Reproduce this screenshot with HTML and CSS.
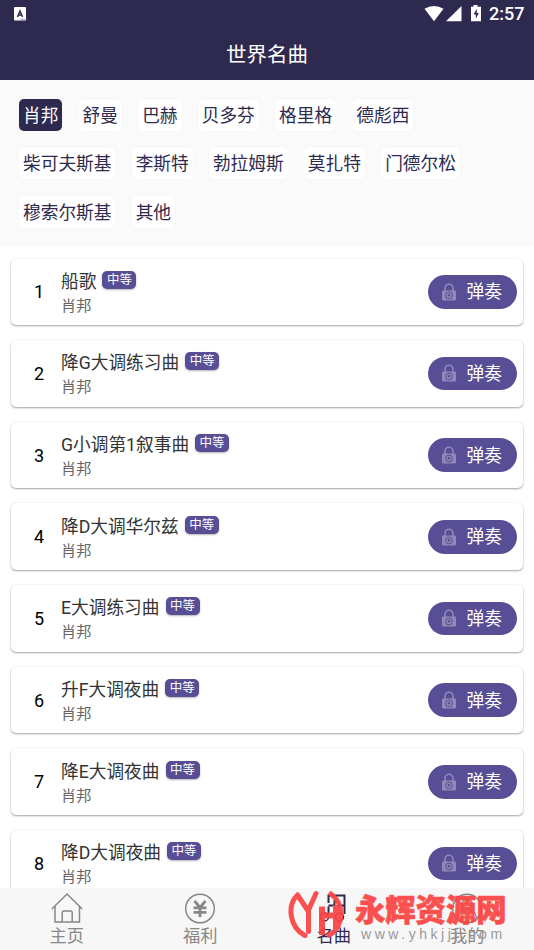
FILE: index.html
```html
<!DOCTYPE html>
<html lang="zh-CN">
<head>
<meta charset="utf-8">
<title>世界名曲</title>
<link rel="stylesheet" href="styles.css">
</head>
<body>
<svg class="defs" width="0" height="0">
  <symbol id="lock" viewBox="0 0 14 18">
    <path d="M3 8V5.2a4 4 0 0 1 8 0V8" fill="none" stroke="currentColor" stroke-width="1.6"/>
    <rect x="0" y="7.6" width="14" height="10" rx="1" fill="currentColor"/>
    <circle cx="7" cy="12.5" r="3.4" fill="none" stroke="#584e96" stroke-width="1"/>
    <circle cx="7" cy="12.2" r="1.3" fill="#584e96"/>
  </symbol>
</svg>
<header class="header">
  <div class="status">
    <svg class="status-app" viewBox="0 0 12 14"><rect width="12" height="13.5" rx=".8" fill="#fff"/><path d="M3.5 10 6 4l2.5 6M4.4 8h3.2" fill="none" stroke="#2e2a4f" stroke-width="1.5"/><path d="M6.5 12.3h4.5" stroke="#2e2a4f" stroke-width=".8" stroke-dasharray="1 .6"/></svg>
    <svg class="status-icons" viewBox="0 0 60 18" fill="#fff"><path d="M.5 3.800Q10 -2 19.500 3.800L10 16.200z"/><path d="M37.500 1v15.200H22z"/><path d="M47 1.800h2.500V0h4v1.800H57v14.400H47z"/><path d="M52.700 3.800 49.600 9.500h2.200v4.200l3-5.700h-2.100z" fill="#2e2a4f"/></svg>
    <span class="clock">2:57</span>
  </div>
  <h1 class="title">世界名曲</h1>
</header>
<section class="filters">
  <div class="chips"><span class="chip active">肖邦</span><span class="chip">舒曼</span><span class="chip">巴赫</span><span class="chip">贝多芬</span><span class="chip">格里格</span><span class="chip">德彪西</span></div>
  <div class="chips"><span class="chip">柴可夫斯基</span><span class="chip">李斯特</span><span class="chip">勃拉姆斯</span><span class="chip">莫扎特</span><span class="chip">门德尔松</span></div>
  <div class="chips"><span class="chip">穆索尔斯基</span><span class="chip">其他</span></div>
</section>
<main class="list">
  <article class="card"><span class="num">1</span><div class="info"><div class="song">船歌<span class="tag">中等</span></div><div class="artist">肖邦</div></div><button class="play"><svg class="lock"><use href="#lock"/></svg><span>弹奏</span></button></article>
  <article class="card"><span class="num">2</span><div class="info"><div class="song">降G大调练习曲<span class="tag">中等</span></div><div class="artist">肖邦</div></div><button class="play"><svg class="lock"><use href="#lock"/></svg><span>弹奏</span></button></article>
  <article class="card"><span class="num">3</span><div class="info"><div class="song">G小调第1叙事曲<span class="tag">中等</span></div><div class="artist">肖邦</div></div><button class="play"><svg class="lock"><use href="#lock"/></svg><span>弹奏</span></button></article>
  <article class="card"><span class="num">4</span><div class="info"><div class="song">降D大调华尔兹<span class="tag">中等</span></div><div class="artist">肖邦</div></div><button class="play"><svg class="lock"><use href="#lock"/></svg><span>弹奏</span></button></article>
  <article class="card"><span class="num">5</span><div class="info"><div class="song">E大调练习曲<span class="tag">中等</span></div><div class="artist">肖邦</div></div><button class="play"><svg class="lock"><use href="#lock"/></svg><span>弹奏</span></button></article>
  <article class="card"><span class="num">6</span><div class="info"><div class="song">升F大调夜曲<span class="tag">中等</span></div><div class="artist">肖邦</div></div><button class="play"><svg class="lock"><use href="#lock"/></svg><span>弹奏</span></button></article>
  <article class="card"><span class="num">7</span><div class="info"><div class="song">降E大调夜曲<span class="tag">中等</span></div><div class="artist">肖邦</div></div><button class="play"><svg class="lock"><use href="#lock"/></svg><span>弹奏</span></button></article>
  <article class="card"><span class="num">8</span><div class="info"><div class="song">降D大调夜曲<span class="tag">中等</span></div><div class="artist">肖邦</div></div><button class="play"><svg class="lock"><use href="#lock"/></svg><span>弹奏</span></button></article>
</main>
<nav class="nav">
  <a class="tab"><svg viewBox="0 0 32 32"><path d="M.8 17 16 2l15.200 15M4 14.500V30h24.500V14.500M11.200 30V20.500q0-1.500 1.500-1.500h7q1.500 0 1.500 1.500V30"/></svg>主页</a>
  <a class="tab"><svg viewBox="0 0 32 32"><circle cx="16" cy="16.500" r="14.300"/><path stroke-width="2.800" d="m10.500 9 5.500 6.500L21.500 9M9.500 15.800h13M9.500 20.300h13M16 15.500V25"/></svg>福利</a>
  <a class="tab current"><svg viewBox="0 0 32 32"><path stroke-width="2" d="M10.500 22V14.500M10.500 11V3.500h16V22M10.500 13.500h6V9h3M20 13.500h6"/><circle cx="6.500" cy="25" r="4"/><circle cx="21.500" cy="25" r="4"/></svg>名曲</a>
  <a class="tab"><svg viewBox="0 0 32 32"><circle cx="16" cy="16.500" r="14.300"/><circle cx="16" cy="12" r="5"/><path d="M6.500 26q1-8 9.500-8t9.500 8"/></svg>我的</a>
  <div class="brand">
    <svg class="brand-mark" viewBox="0 0 56 50"><path d="M9.500 5C-1 15 1 37 17 45.500M43 4C57 14 56 38 41 45M9.500 5 19.500 20M28 3.500 20.500 20v21.500"/><path class="brand-bar" d="M34 16.500V45M34 25.500h14M48 15v24"/></svg>
    <div class="brand-text"><b>永辉资源网</b><span>www.yhkjjj.com</span></div>
  </div>
</nav>
</body>
</html>
```
FILE: styles.css
```css
* { box-sizing: border-box; }
body {
  margin: 0;
  width: 534px;
  height: 950px;
  overflow: hidden;
  display: flex;
  flex-direction: column;
  background: #fff;
  font-family: Roboto, "Noto Sans CJK SC", sans-serif;
}
.defs { position: absolute; }
.header { flex: none; height: 80px; background: #2e2a4f; color: #fff; }
.status { height: 27px; display: flex; align-items: center; padding: 0 9px 0 14px; }
.status-app { width: 12px; height: 14px; }
.status-icons { width: 60px; height: 18px; margin-left: auto; margin-right: 5px; margin-top: 1px; }
.clock { font-size: 18px; font-weight: 500; line-height: 27px; width: 36px; }
.title { margin: 13px 0 0; font-size: 20.500px; font-weight: 400; line-height: 30px; text-align: center; }
.filters {
  flex: none;
  height: 167px;
  padding: 19px 19px 0;
  background: #fafafa;
  display: flex;
  flex-direction: column;
  gap: 16.300px;
}
.chips { display: flex; gap: 16.200px; }
.chip {
  height: 32px;
  padding: 0 4px;
  border-radius: 5px;
  background: #fff;
  box-shadow: 0 0 2px rgba(0, 0, 0, .05);
  color: #2e2a4f;
  font-size: 17.700px;
  line-height: 35px;
  white-space: nowrap;
}
.active { background: #2e2a4f; color: #fff; }
.list {
  flex: 1;
  min-height: 0;
  overflow: hidden;
  padding: 11.500px 11px 0;
  display: flex;
  flex-direction: column;
  gap: 15px;
}
.card {
  flex: none;
  height: 66.670px;
  display: flex;
  align-items: center;
  padding-right: 6px;
  border-radius: 5px;
  background: #fff;
  box-shadow: 0 1px 2px rgba(0, 0, 0, .36), 0 0 1px rgba(0, 0, 0, .12);
}
.num { width: 50px; padding: 0 0 0 23px; font-size: 18px; color: #000; }
.info { flex: 1; }
.song {
  display: flex;
  align-items: center;
  height: 25px;
  margin-top: 3px;
  color: #333;
  font-size: 17.700px;
  line-height: 25px;
}
.tag {
  margin: -5px 0 0 6px;
  width: 34px;
  height: 18px;
  border-radius: 5px;
  background: #584e96;
  box-shadow: 0 1px 2px rgba(0, 0, 0, .3);
  color: #fff;
  font-size: 12.500px;
  line-height: 17px;
  text-align: center;
}
.artist { color: #666; font-size: 15.200px; line-height: 22px; }
.play {
  width: 89px;
  height: 33.500px;
  padding: 0 15px 0 14px;
  border: 0;
  border-radius: 17px;
  background: #584e96;
  color: #fff;
  font: inherit;
  font-size: 17.700px;
  line-height: 33px;
  display: flex;
  align-items: center;
  justify-content: space-between;
}
.play span { padding-top: 2px; }
.lock { width: 14px; height: 18px; color: #8f88b8; }
.nav {
  position: relative;
  flex: none;
  height: 62px;
  display: flex;
  background: #f7f7f7;
}
.tab {
  flex: 1;
  display: flex;
  flex-direction: column;
  align-items: center;
  padding-top: 4px;
  color: #888;
  font-size: 17.300px;
  line-height: 25px;
}
.tab svg {
  width: 32px;
  height: 32px;
  fill: none;
  stroke: currentColor;
  stroke-width: 1.500;
}
.current { color: #2e2a4f; }
.brand {
  position: absolute;
  left: 288px;
  top: 0;
  display: flex;
}
.brand-mark {
  width: 56px;
  height: 50px;
  margin-top: 2px;
  fill: none;
  stroke: #fb4444;
  stroke-width: 5;
  stroke-linecap: round;
  opacity: .93;
}
.brand-bar { stroke-width: 6; stroke-linecap: butt; }
.brand-text { margin-left: 11px; display: flex; flex-direction: column; }
.brand-text b {
  color: #fb4444;
  font-size: 30.300px;
  font-weight: 900;
  line-height: 38px;
  margin-top: 4px;
  opacity: .93;
  -webkit-text-stroke: .7px #fb4444;
}
.brand-text span {
  margin: -5px 0 0 6px;
  color: #999;
  font: 14px/18px "Liberation Sans", sans-serif;
  letter-spacing: 3.550px;
  white-space: nowrap;
}
```
